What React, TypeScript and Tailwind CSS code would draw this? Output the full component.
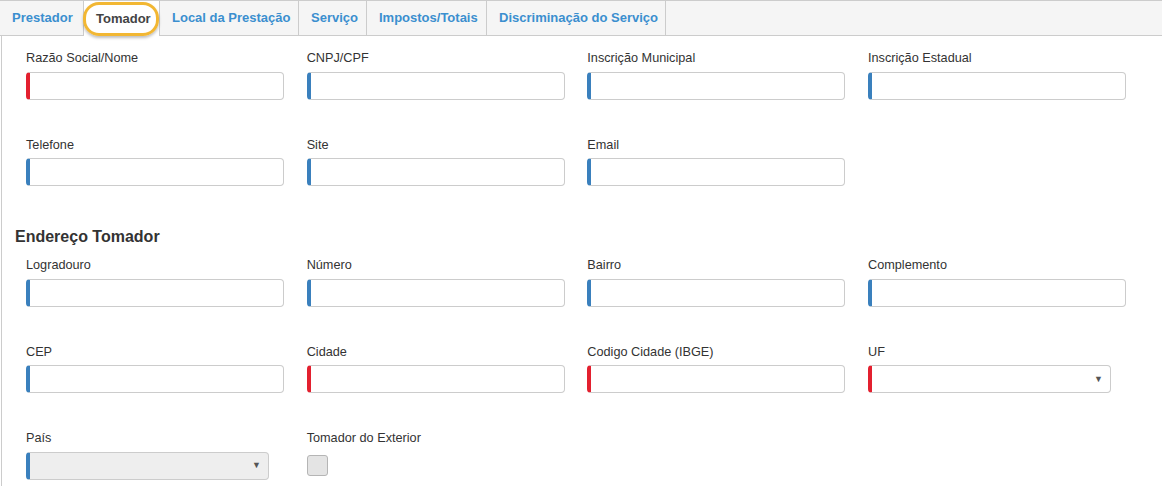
import React from "react";

type Field = {
  label: string;
  kind?: "input" | "select" | "disabledSelect" | "checkbox";
  required?: boolean;
};

const tabs = [
  { label: "Prestador", w: "w-[84px]" },
  { label: "Tomador", w: "w-[76px]", active: true },
  { label: "Local da Prestação", w: "w-[139px]" },
  { label: "Serviço", w: "w-[68px]" },
  { label: "Impostos/Totais", w: "w-[120px]" },
  { label: "Discriminação do Serviço", w: "w-[179px]" },
];

const dados: Field[] = [
  { label: "Razão Social/Nome", required: true },
  { label: "CNPJ/CPF" },
  { label: "Inscrição Municipal" },
  { label: "Inscrição Estadual" },
  { label: "Telefone" },
  { label: "Site" },
  { label: "Email" },
];

const endereco: Field[] = [
  { label: "Logradouro" },
  { label: "Número" },
  { label: "Bairro" },
  { label: "Complemento" },
  { label: "CEP" },
  { label: "Cidade", required: true },
  { label: "Codigo Cidade (IBGE)", required: true },
  { label: "UF", kind: "select", required: true },
  { label: "País", kind: "disabledSelect" },
  { label: "Tomador do Exterior", kind: "checkbox" },
];

function Control({ field }: { field: Field }) {
  const accent = field.required ? "border-l-[#e3202f]" : "border-l-[#3a80bd]";
  if (field.kind === "checkbox") {
    return (
      <div className="pt-[3px]">
        <div className="size-[21px] rounded-[3px] border border-[#b5b5b5] bg-[#e4e4e4]" />
      </div>
    );
  }
  if (field.kind === "select" || field.kind === "disabledSelect") {
    const bg = field.kind === "disabledSelect" ? "bg-[#eeeeee]" : "bg-white";
    return (
      <div className={`flex h-[28px] w-[243px] items-center justify-end rounded-[4px] border border-[#cccccc] border-l-4 ${accent} ${bg} pr-[7px]`}>
        <span className="text-[9px] leading-none text-[#555]">▼</span>
      </div>
    );
  }
  return <div className={`h-[28px] w-full rounded-[4px] border border-[#cccccc] border-l-4 ${accent} bg-white`} />;
}

function FieldGrid({ fields }: { fields: Field[] }) {
  return (
    <div className="grid grid-cols-[258px_258px_258px_258px] gap-x-[22.67px] gap-y-[37px] pl-[24px]">
      {fields.map((f) => (
        <div key={f.label} className="flex flex-col">
          <label className="mb-[5.5px] pt-px text-[12.7px] leading-[15px] text-[#333]">{f.label}</label>
          <Control field={f} />
        </div>
      ))}
    </div>
  );
}

export default function App() {
  return (
    <div className="h-[486px] w-[1162px] overflow-hidden bg-white font-['Liberation_Sans',Arial,sans-serif]">
      <div className="relative flex h-[36px] border-t border-b border-[#cccccc] bg-[#f5f5f5]">
        {tabs.map((t) => (
          <div
            key={t.label}
            className={`${t.w} flex items-center border-r border-[#cccccc] pl-3 text-[13px] font-bold ${
              t.active ? "-mb-px bg-white text-[#444]" : "text-[#3b8fcf]"
            }`}
          >
            {t.label}
          </div>
        ))}
        <div className="pointer-events-none absolute left-[83px] top-[1px] h-[34px] w-[76px] rounded-[16px] border-[3px] border-[#f2b733] shadow-[0_2px_3px_rgba(0,0,0,0.25)]" />
      </div>

      <div className="ml-px h-full border-l border-[#cccccc] pt-[14px]">
        <FieldGrid fields={dados} />
        <h3 className="mt-[41.5px] mb-[11.5px] pl-[13px] text-[16px] font-bold leading-[18px] text-[#333]">Endereço Tomador</h3>
        <FieldGrid fields={endereco} />
      </div>
    </div>
  );
}
